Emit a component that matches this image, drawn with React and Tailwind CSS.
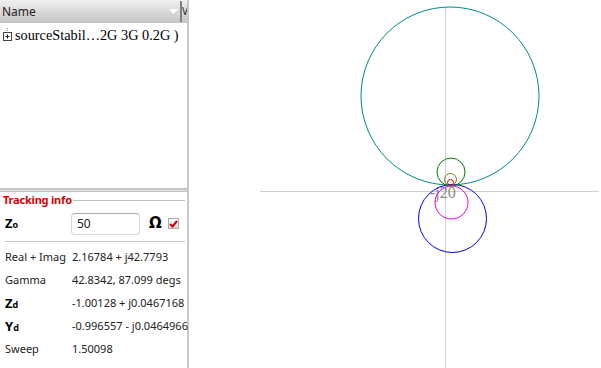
import React from "react";

function Sub({ main, sub }) {
  return (
    <span className="font-bold text-black">
      <span className="text-[13px]">{main}</span>
      <span className="text-[9px]">{sub}</span>
    </span>
  );
}

function Row({ label, value }) {
  return (
    <div className="flex items-center h-[23px]">
      <div className="w-[72px] shrink-0 pl-[5px] whitespace-nowrap">{label}</div>
      <div className="whitespace-nowrap">{value}</div>
    </div>
  );
}

export default function App() {
  return (
    <div className="flex w-[601px] h-[368px] bg-white overflow-hidden font-['Noto_Sans',sans-serif] text-[11px] text-[#222]">
      <div className="w-[189px] shrink-0 flex flex-col border-r-2 border-[#c9c9c9]">
        <div className="h-[23px] flex items-stretch bg-gradient-to-b from-[#f0f0f0] to-[#c4c4c4]">
          <div className="flex-1 flex items-center pl-[2px] text-[12px] text-[#222]">Name</div>
          <div className="w-[14px] flex items-center justify-center">
            <svg width="9" height="6" viewBox="0 0 9 6">
              <path d="M0 0 H9 L4.5 5 Z" fill="#fff" />
            </svg>
          </div>
          <div className="w-[2px] bg-[#808080] my-[1px]" />
          <div className="w-[5px] flex items-center overflow-hidden text-[10px] text-[#222]">V</div>
        </div>
        <div className="h-[165px] pt-[3px] pl-[2px] relative">
          <div className="flex items-center font-['Liberation_Serif',serif] text-[14.3px] text-black whitespace-nowrap leading-[18px]">
            <svg width="11" height="14" viewBox="0 0 11 14" className="mr-[2px]">
              <path d="M5.5 0 V3" stroke="#888" strokeDasharray="1 1" />
              <rect x="1.5" y="4.5" width="8" height="8" fill="none" stroke="#444" />
              <path d="M3.5 8.5 H7.5 M5.5 6.5 V10.5" stroke="#222" />
            </svg>
            sourceStabil…2G 3G 0.2G )
          </div>
        </div>
        <div className="h-[4px] border-t-[2px] border-b border-[#c4c4c4] bg-[#e2e2e2]" />
        <div className="flex items-center h-[14px] mt-[1px] pl-[3px] pr-[2px]">
          <span className="font-bold text-[#d50000] text-[11px] tracking-[-0.2px] whitespace-nowrap">Tracking info</span>
          <div className="flex-1 h-px bg-[#c0c0c0] ml-[1px]" />
        </div>
        <div className="flex items-center h-[31px] mt-[1px]">
          <div className="w-[71px] pl-[5px]"><Sub main="Z" sub="o" /></div>
          <div className="w-[69px] h-[22px] border border-[#d6d6d6] border-t-[#a8a8a8] rounded-sm flex items-center pl-[5px] text-[12px] text-[#222]">50</div>
          <div className="w-[28px] pl-[9px] font-bold text-[15px] text-black font-['DejaVu_Sans',sans-serif] leading-none">Ω</div>
          <div className="w-[11px] h-[11px] border border-[#aaa] bg-gradient-to-b from-[#fff] to-[#ddd] flex items-center justify-center">
            <svg width="9" height="8" viewBox="0 0 9 8"><path d="M1 4 L3.5 6.5 L8 1" stroke="#d00000" strokeWidth="2" fill="none" /></svg>
          </div>
        </div>
        <div className="h-px bg-[#c8c8c8] ml-[5px] mr-[2px] mt-[2px]" />
        <div className="mt-[4px]">
          <Row label="Real + Imag" value="2.16784 + j42.7793" />
          <Row label="Gamma" value="42.8342, 87.099 degs" />
          <Row label={<Sub main="Z" sub="d" />} value="-1.00128 + j0.0467168" />
          <Row label={<Sub main="Y" sub="d" />} value="-0.996557 - j0.0464966" />
          <Row label="Sweep" value="1.50098" />
        </div>
      </div>
      <div className="flex-1 relative">
        <svg width="410" height="368" viewBox="191 0 410 368" className="absolute left-0 top-0">
          <line x1="262" y1="191.5" x2="601" y2="191.5" stroke="#cfcfcf" />
          <line x1="447.5" y1="7" x2="447.5" y2="368" stroke="#cfcfcf" />
          <text x="432" y="198" fontFamily="Liberation Serif, serif" fontSize="16" fill="#8a8a8a">-j20</text>
          <circle cx="452" cy="96" r="89" fill="none" stroke="#008b8b" />
          <circle cx="454.5" cy="218.5" r="34" fill="none" stroke="#0000e6" />
          <circle cx="453.5" cy="202.5" r="16.5" fill="none" stroke="#e000e0" />
          <circle cx="453" cy="172" r="14" fill="none" stroke="#008000" />
          <circle cx="452.5" cy="179.5" r="6" fill="none" stroke="#808000" />
          <circle cx="452.5" cy="182.5" r="3" fill="none" stroke="#e00000" />
        </svg>
      </div>
    </div>
  );
}
